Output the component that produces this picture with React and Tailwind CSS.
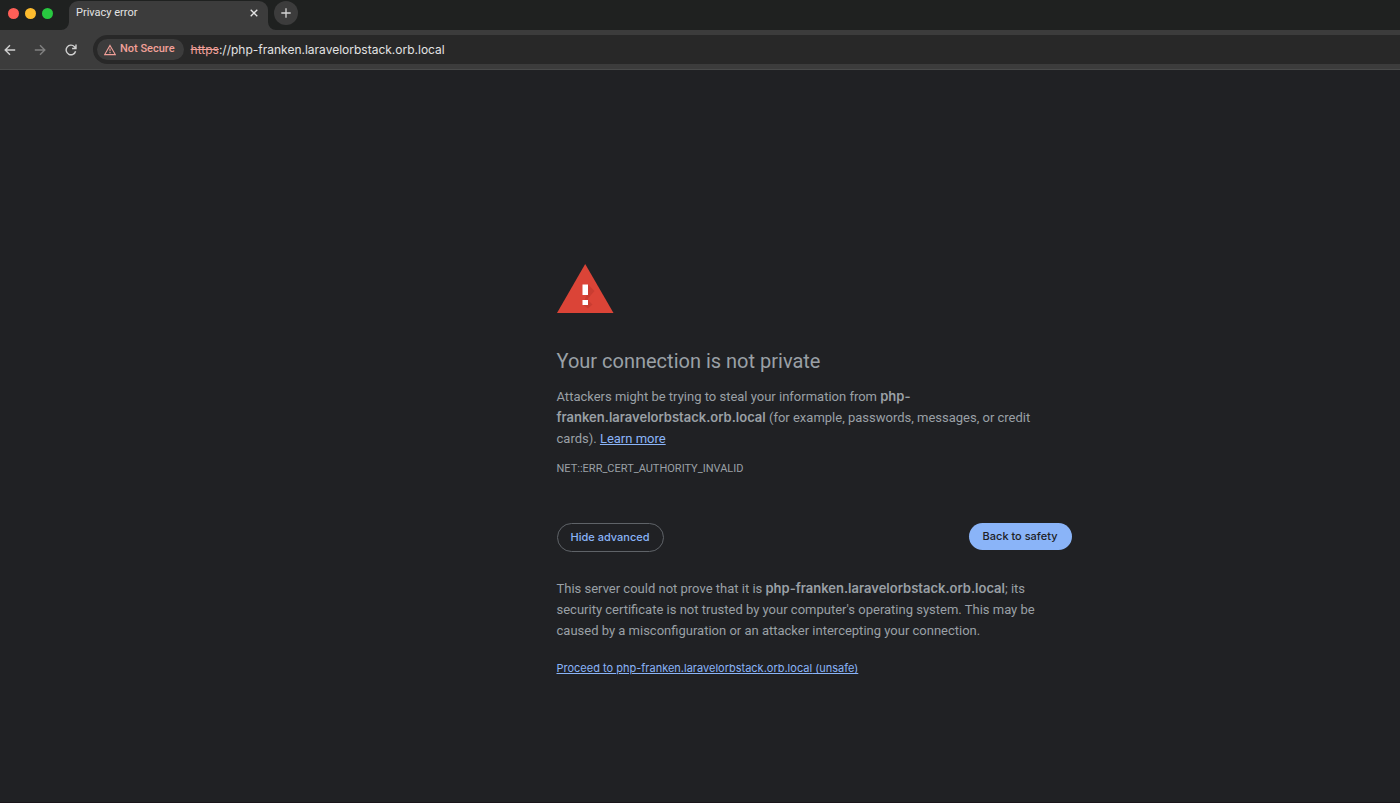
import React from "react";

const HOST = "php-franken.laravelorbstack.orb.local";

const TabStrip = () => (
  <div className="flex h-[30px] bg-[#1f2120]">
    {/* Window controls */}
    <div className="flex items-center gap-[6px] pb-[3px] pl-2">
      <button aria-label="Close window" className="size-[11px] rounded-full bg-[#ff5f57]" />
      <button aria-label="Minimize window" className="size-[11px] rounded-full bg-[#febc2e]" />
      <button aria-label="Zoom window" className="size-[11px] rounded-full bg-[#28c840]" />
    </div>

    {/* Active tab */}
    <div className="ml-2 flex items-end">
      <svg className="size-2" viewBox="0 0 8 8" aria-hidden="true">
        <path d="M8 0v8H0a8 8 0 0 0 8-8z" fill="#3c3c3c" />
      </svg>
      <div className="flex h-[29px] w-[199px] items-center justify-between rounded-t-[9px] bg-[#3c3c3c] pr-2 pb-[5px] pl-[7px]">
        <span className="font-['Roboto',sans-serif] text-[11px] leading-4 text-[#e3e3e3]">Privacy error</span>
        <button aria-label="Close tab" className="flex size-3 items-center justify-center">
          <svg className="size-3" viewBox="0 0 12 12" fill="none" stroke="#e3e3e3" strokeWidth="1.3">
            <path d="M2.7 2.7l6.6 6.6M9.3 2.7L2.7 9.3" />
          </svg>
        </button>
      </div>
      <svg className="size-2" viewBox="0 0 8 8" aria-hidden="true">
        <path d="M0 0v8h8a8 8 0 0 1-8-8z" fill="#3c3c3c" />
      </svg>
    </div>

    <button
      aria-label="New tab"
      className="-ml-[2px] mt-px flex size-6 items-center justify-center rounded-full bg-[#3c3c3c]"
    >
      <svg className="size-3" viewBox="0 0 12 12" fill="none" stroke="#d5d5d5" strokeWidth="1.3">
        <path d="M6 1.3v9.4M1.3 6h9.4" />
      </svg>
    </button>
  </div>
);

const Toolbar = () => (
  <div className="flex h-10 items-center border-b border-[#4a4b4b] bg-[#3c3c3c] pl-1">
    <div className="flex items-center gap-[18px]">
      <button aria-label="Back">
        <svg className="size-3" viewBox="0 0 12 12" fill="none" stroke="#d0d0d0" strokeWidth="1.4">
          <path d="M11.2 6H1.3M6 1.2L1.2 6 6 10.8" />
        </svg>
      </button>
      <button aria-label="Forward" disabled>
        <svg className="size-3" viewBox="0 0 12 12" fill="none" stroke="#808080" strokeWidth="1.4">
          <path d="M.8 6h9.9M6 1.2L10.8 6 6 10.8" />
        </svg>
      </button>
      <button aria-label="Reload" className="ml-px">
        <svg className="size-3" viewBox="0 0 12 12" fill="none" stroke="#d0d0d0" strokeWidth="1.4">
          <path d="M10.6 7.2A4.8 4.8 0 1 1 9.5 2.7L11 4.4M11 .6v3.9H7.1" />
        </svg>
      </button>
    </div>

    {/* Address bar, runs off to the right edge */}
    <div className="ml-4 flex h-[29px] flex-1 items-center rounded-l-full bg-[#282828] pl-1">
      <button className="flex h-[21px] items-center gap-1 rounded-full bg-[#3c3c3c] pr-[9px] pl-[7px] font-['Roboto',sans-serif] text-[11px] font-medium text-[#f2a099]">
        <svg className="size-3" viewBox="0 0 12 12" fill="none" stroke="#f2a099" strokeWidth="1.1">
          <path d="M6 1.4L11.3 10.6H.7z" />
          <path d="M6 4.6v2.7M6 8.1v1.2" />
        </svg>
        Not Secure
      </button>
      <label htmlFor="url" className="ml-[7px] text-[12px] text-[#f2a099] line-through">
        https
      </label>
      <input
        id="url"
        type="text"
        aria-label="Address"
        defaultValue={`://${HOST}`}
        spellCheck={false}
        className="min-w-0 flex-1 bg-transparent text-[12px] text-[#e3e3e3] outline-none"
      />
    </div>
  </div>
);

const WarningIcon = () => (
  <svg className="h-[49px] w-[57px]" viewBox="0 0 57 49" aria-hidden="true">
    <path d="M28.2 0L56.500 49H0z" fill="#db4437" />
    <path d="M31 20.500l6.500 6.500-6.500 7.500v1.500l4.500 4.500-4.500 4-5.500-4 4-9z" fill="#b8352b" opacity=".5" />
    <path d="M25.500 20.500h5.500v10.500h-5.500zM25.500 36h5.500v5h-5.500z" fill="#fff" />
  </svg>
);

const Host = () => <strong className="font-['Inter',sans-serif] font-semibold">{HOST}</strong>;

const App = () => {
  return (
    <div className="flex min-h-screen flex-col border-b border-[#19141a] bg-[#202124] font-['Inter',sans-serif]">
      <TabStrip />
      <Toolbar />

      {/* Interstitial */}
      <main className="flex flex-1 justify-center pt-[194px] pb-10 pl-[228px] font-['Roboto',sans-serif] text-[13px] leading-[21px] text-[#9aa0a6]">
        <div className="w-full max-w-[515px]">
          <WarningIcon />

          <h1 className="mt-[34px] text-[20px] leading-7">Your connection is not private</h1>

          <p className="mt-[11px] pr-6">
            Attackers might be trying to steal your information from <Host /> (for example, passwords,
            messages, or credit cards).{" "}
            <a href="#learn-more" className="text-[#8ab4f8] underline">
              Learn more
            </a>
          </p>

          <div className="mt-3 text-[11px] leading-4">NET::ERR_CERT_AUTHORITY_INVALID</div>

          {/* Buttons */}
          <div className="mt-[46px] flex items-start justify-between font-['Inter',sans-serif]">
            <button className="h-[29px] rounded-full border border-[#5f6368] px-[13px] text-[11px] font-medium text-[#8ab4f8]">
              Hide advanced
            </button>
            <button className="h-[27px] rounded-full bg-[#8ab4f8] px-[14px] text-[11px] font-medium text-[#202124]">
              Back to safety
            </button>
          </div>

          {/* Advanced details */}
          <p className="mt-[26px] pr-4">
            This server could not prove that it is <Host />; its security certificate is not trusted by your
            computer's operating system. This may be caused by a misconfiguration or an attacker
            intercepting your connection.
          </p>
          <p className="mt-[17px] font-['Inter',sans-serif] text-[11px]">
            <a href="#proceed" className="text-[#8ab4f8] underline">
              Proceed to {HOST} (unsafe)
            </a>
          </p>
        </div>
      </main>
    </div>
  );
};

export default App;
